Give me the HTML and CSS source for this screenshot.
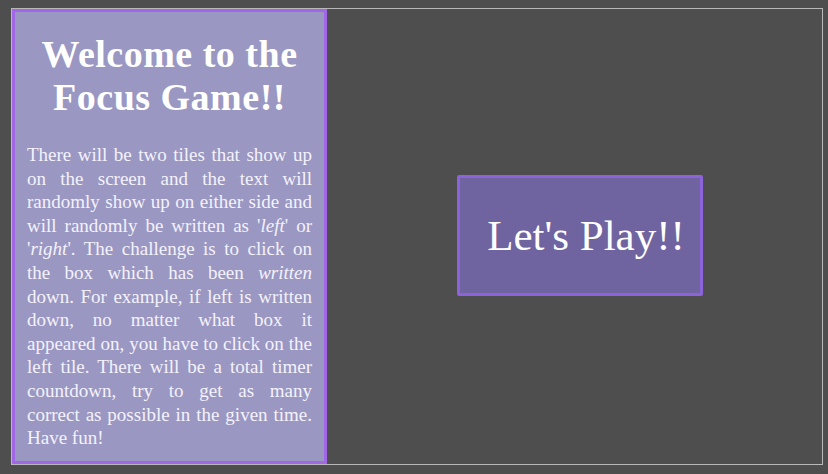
FILE: index.html
```html
<!DOCTYPE html>
<html lang="en">
<head>
<meta charset="utf-8">
<title>Focus Game</title>
<link rel="stylesheet" href="styles.css">
</head>
<body>
<div class="page">
  <main class="frame">
    <section class="intro">
      <h1 class="intro-title">Welcome to the Focus Game!!</h1>
      <p class="intro-text">There will be two tiles that show up on the screen and the text will randomly show up on either side and will randomly be written as '<em>left</em>' or '<em>right</em>'. The challenge is to click on the box which has been <em>written</em> down. For example, if left is written down, no matter what box it appeared on, you have to click on the left tile. There will be a total timer countdown, try to get as many correct as possible in the given time. Have fun!</p>
    </section>
    <section class="stage">
      <button class="play-btn" type="button">Let's Play!!</button>
    </section>
  </main>
</div>
</body>
</html>
```
FILE: styles.css
```css
html, body {
  margin: 0;
  padding: 0;
  background: #4e4e4e;
}
body {
  width: 828px;
  height: 474px;
  overflow: hidden;
  font-family: "Liberation Serif", "DejaVu Serif", serif;
}
.page {
  padding: 8px 0 0 11px;
}
.frame {
  box-sizing: border-box;
  width: 812px;
  height: 457px;
  border: 1px solid #b9b9b9;
  display: flex;
}
.intro {
  box-sizing: border-box;
  width: 315px;
  height: 100%;
  background: #9a97c2;
  border: 3px solid #a167e6;
  padding: 21px 12px 0 12px;
  color: #ffffff;
}
.intro-title {
  margin: 0;
  font-size: 38px;
  line-height: 43px;
  letter-spacing: 0.5px;
  font-weight: bold;
  text-align: center;
}
.intro-text {
  margin: 24px 0 0 0;
  font-size: 19px;
  line-height: 23.6px;
  text-align: justify;
  color: #f4f2fb;
}
.stage {
  flex: 1;
  display: flex;
  align-items: center;
  justify-content: center;
  padding-left: 11px;
}
.play-btn {
  box-sizing: border-box;
  width: 246px;
  height: 121px;
  background: #7064a0;
  border: 3px solid #8d63dc;
  border-radius: 2px;
  color: #ffffff;
  font-family: "Liberation Serif", "DejaVu Serif", serif;
  font-size: 43px;
  padding: 0 0 0 12px;
  margin-top: -2px;
  cursor: pointer;
}
```
